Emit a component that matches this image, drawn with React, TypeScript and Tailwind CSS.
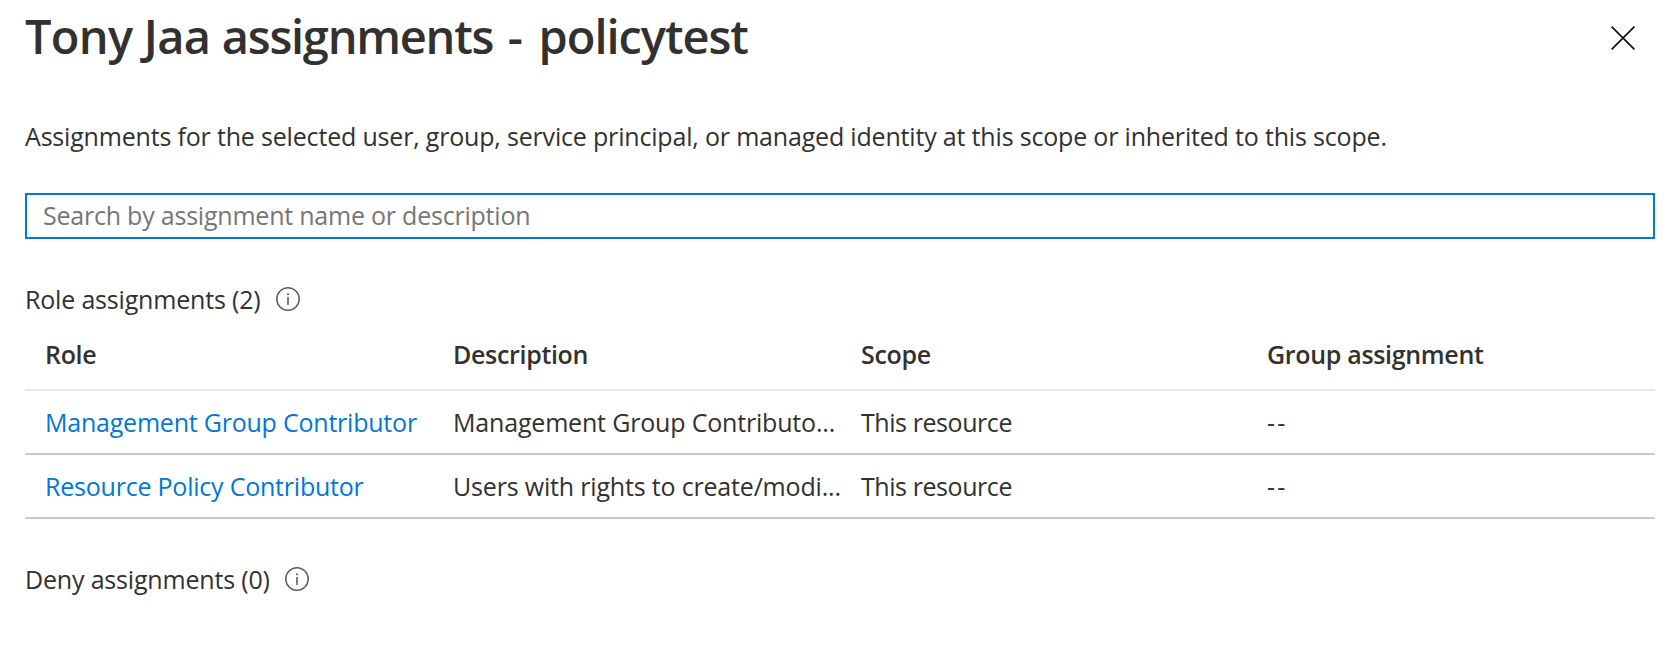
const columns = ["Role", "Description", "Scope", "Group assignment"];

const rows = [
  ["Management Group Contributor", "Management Group Contributo...", "This resource", "--"],
  ["Resource Policy Contributor", "Users with rights to create/modi...", "This resource", "--"],
];

const Info = () => (
  <svg className="block size-6 shrink-0" viewBox="0 0 24 24" fill="none" stroke="#605e5c">
    <circle cx="12" cy="12" r="11.2" strokeWidth="1.5" />
    <path d="M12 10v8M12 6.2v2" strokeWidth="1.6" />
  </svg>
);

const Close = () => (
  <svg className="mt-[22px] mr-5 block size-6 shrink-0" viewBox="0 0 24 24" fill="none" stroke="#111" strokeWidth="1.7">
    <path d="M.6.6l22.8 22.8M23.4.6L.6 23.4" />
  </svg>
);

const grid = "grid grid-cols-[408px_408px_406px_1fr] pl-5 border-b-2";

export default function App() {
  return (
    <main className="flex h-[656px] flex-col bg-white pt-1 pr-5 pl-[25px] font-['Open_Sans',sans-serif] text-[25px] leading-[34px] tracking-[-0.18px] whitespace-nowrap text-[#323130]">
      <header className="flex h-[115px] items-start justify-between">
        <h1 className="text-[47px] leading-[64px] font-semibold tracking-[-0.72px]">
          Tony Jaa <span className="tracking-[-1.27px]">assignments</span>{" "}
          <span className="mr-[5px] ml-[3px]">-</span>{" "}
          <span className="tracking-[-1.05px]">policytest</span>
        </h1>
        <button aria-label="Close"><Close /></button>
      </header>
      <p>
        Assignments for the selected user, group, service principal, or managed identity at this scope or inherited to this scope.
      </p>
      <input
        className="mt-10 h-[46px] shrink-0 border-2 border-[#0078d4] px-4 pb-0.5 tracking-[-0.22px] outline-none placeholder:text-[#767676]"
        placeholder="Search by assignment name or description"
      />
      <div className="mt-[43px] flex">
        <h2 className="w-[251px]">Role assignments (2)</h2>
        <div className="pt-[5px]"><Info /></div>
      </div>
      <section className="mt-5">
        <div className={`${grid} h-[55px] border-[#eaeaea] pt-px font-semibold tracking-[-0.32px]`}>
          {columns.map((c) => <div key={c}>{c}</div>)}
        </div>
        {rows.map((r) => (
          <div key={r[0]} className={`${grid} h-16 items-center border-[#c8c8c8]`}>
            <a className="tracking-[-0.22px] text-[#0078d4]">{r[0]}</a>
            <span>{r[1]}</span>
            <span className="tracking-[-0.43px]">{r[2]}</span>
            <span className="tracking-[2.2px]">{r[3]}</span>
          </div>
        ))}
      </section>
      <div className="mt-[43px] flex">
        <h2 className="w-[260px]">Deny assignments (0)</h2>
        <div className="pt-[5px]"><Info /></div>
      </div>
    </main>
  );
}
